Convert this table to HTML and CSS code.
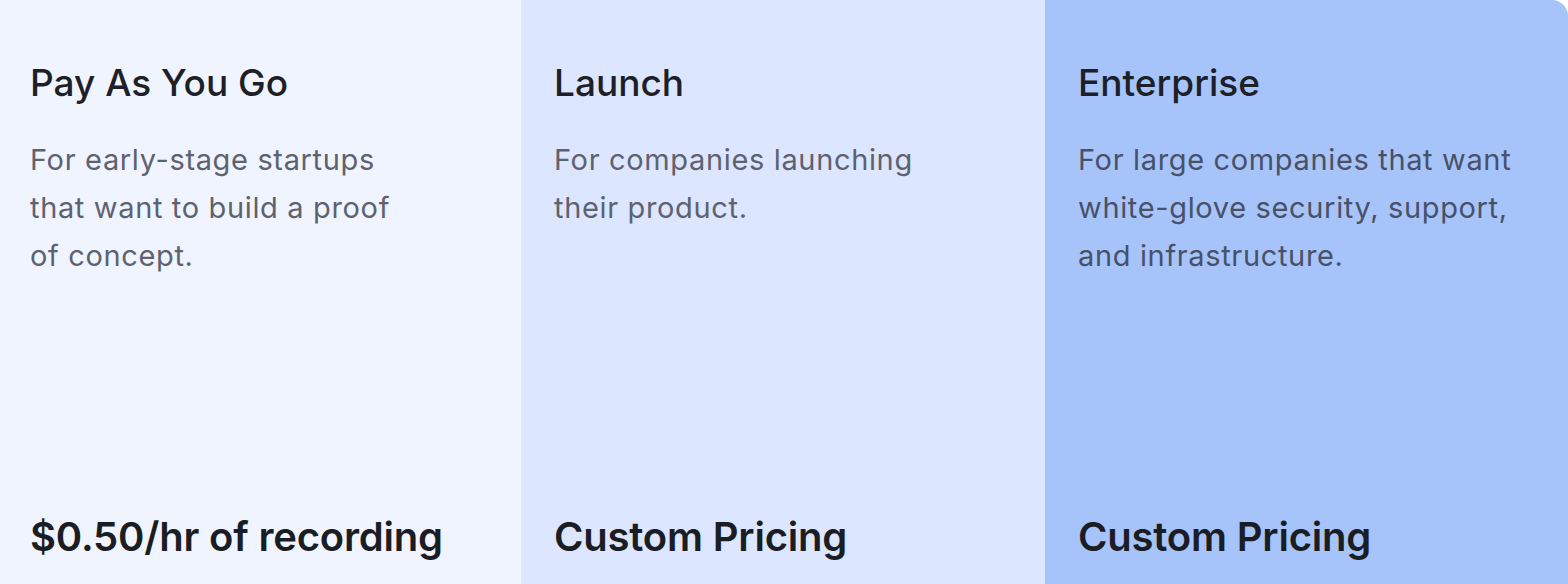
FILE: index.html
```html
<!DOCTYPE html>
<html lang="en">
<head>
<meta charset="utf-8">
<title>Pricing</title>
<link rel="stylesheet" href="styles.css">
</head>
<body>
<div class="plans">
  <section class="plan plan-payg">
    <h2 class="plan-title">Pay As You Go</h2>
    <p class="plan-desc">For early-stage startups that want to build a proof of concept.</p>
    <p class="plan-price">$0.50/hr of recording</p>
  </section>
  <section class="plan plan-launch">
    <h2 class="plan-title">Launch</h2>
    <p class="plan-desc">For companies launching their product.</p>
    <p class="plan-price">Custom Pricing</p>
  </section>
  <section class="plan plan-enterprise">
    <h2 class="plan-title">Enterprise</h2>
    <p class="plan-desc">For large companies that want white-glove security, support, and infrastructure.</p>
    <p class="plan-price">Custom Pricing</p>
  </section>
</div>
</body>
</html>
```

FILE: styles.css
```css
* { box-sizing: border-box; }
html, body { margin: 0; padding: 0; background: #ffffff; }
body { font-family: Inter, "Noto Sans", sans-serif; color: #1c1f26; }
.plans {
  display: grid;
  grid-template-columns: 521px 524px 1fr;
  height: 584px;
  border-top-right-radius: 16px;
  overflow: hidden;
}
.plan {
  display: flex;
  flex-direction: column;
  padding: 58px 28px 22px 33px;
}
.plan-payg { background: #f0f4fe; padding-left: 30px; }
.plan-launch { background: #dce6fe; }
.plan-enterprise { background: #a6c4fa; }
.plan-title {
  margin: 0;
  font-size: 37px;
  font-weight: 500;
  line-height: 50px;
  letter-spacing: 0;
  color: #1d2027;
}
.plan-desc {
  margin: 28px 0 0 0;
  font-size: 29px;
  line-height: 48px;
  font-weight: 400;
  letter-spacing: 0.65px;
  color: #5d6270;
}
.plan-payg .plan-desc { max-width: 392px; }
.plan-launch .plan-desc { max-width: 400px; }
.plan-enterprise .plan-desc { color: #485168; }
.plan-price {
  margin: auto 0 0 0;
  font-size: 40px;
  line-height: 50px;
  font-weight: 600;
  letter-spacing: -0.2px;
  color: #1a1d24;
}
```
